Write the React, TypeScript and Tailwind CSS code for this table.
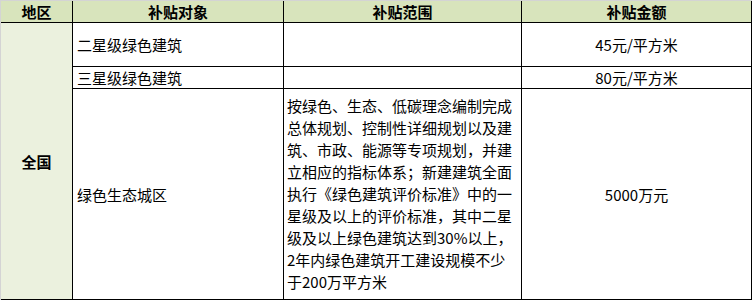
import React from 'react';

const scopeLines: string[] = [
  '按绿色、生态、低碳理念编制完成',
  '总体规划、控制性详细规划以及建',
  '筑、市政、能源等专项规划，并建',
  '立相应的指标体系；新建建筑全面',
  '执行《绿色建筑评价标准》中的一',
  '星级及以上的评价标准，其中二星',
  '级及以上绿色建筑达到30%以上，',
  '2年内绿色建筑开工建设规模不少',
  '于200万平方米',
];

const headers = ['地区', '补贴对象', '补贴范围', '补贴金额'];

const App: React.FC = () => {
  return (
    <div
      className="w-[752px] h-[300px] bg-white text-black text-[15px]"
      style={{ fontFamily: '"Noto Sans CJK SC", "Noto Sans", sans-serif' }}
    >
      <div className="grid grid-cols-[71px_210px_237px_229px] grid-rows-[21px_43px_21px_210px] gap-px bg-black pr-px pb-px border-l border-t border-[#d4d4d4]">
        {/* header row */}
        {headers.map((h) => (
          <div key={h} className="bg-[#d8e4bc] flex items-center justify-center font-bold leading-none">
            {h}
          </div>
        ))}

        {/* region column spans all body rows */}
        <div className="row-span-3 bg-[#ebf1de] flex items-center justify-center font-bold leading-none">
          全国
        </div>

        <div className="bg-white flex items-center pl-1 leading-none">二星级绿色建筑</div>
        <div className="bg-white"></div>
        <div className="bg-white flex items-center justify-center leading-none">45元/平方米</div>

        <div className="bg-white flex items-center pl-1 leading-none">三星级绿色建筑</div>
        <div className="bg-white"></div>
        <div className="bg-white flex items-center justify-center leading-none">80元/平方米</div>

        <div className="bg-white flex items-center pl-1 leading-none">绿色生态城区</div>
        <div className="bg-white flex flex-col justify-center pl-[3px] leading-[22px]">
          {scopeLines.map((line) => (
            <div key={line} className="whitespace-nowrap">
              {line}
            </div>
          ))}
        </div>
        <div className="bg-white flex items-center justify-center leading-none">5000万元</div>
      </div>
    </div>
  );
};

export default App;
